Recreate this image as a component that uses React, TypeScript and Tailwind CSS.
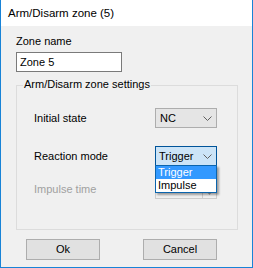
export default function App() {
  return (
    <div className="w-[253px] h-[268px] flex flex-col border-x border-b border-[#1883d7] bg-[#f0f0f0] text-[11px] leading-[13px] text-black font-['Liberation_Sans',Arial,sans-serif]">
      <div className="h-[26px] shrink-0 bg-white flex items-center pl-[7px] text-[11.5px]">Arm/Disarm zone (5)</div>
      <div className="flex flex-col pl-[15px] pt-[9px]">
        <div>Zone name</div>
        <div className="mt-[4px] w-[106px] h-[20px] border border-[#7a7a7a] bg-white pl-[3px] flex items-center">Zone 5</div>
        <div className="mt-[13px] relative w-[222px] h-[145px] border border-[#dcdcdc] flex flex-col pt-[22px] pl-[17px]">
          <span className="absolute left-[6px] -top-[8px] px-[1px] bg-[#f0f0f0]">Arm/Disarm zone settings</span>
          <div className="flex items-center h-[20px]">
            <div className="w-[121px]">Initial state</div>
            <div className="w-[62px] h-[20px] border border-[#adadad] bg-[#e5e5e5] flex items-center justify-between pl-[4px] pr-[4px]">
              <span>NC</span>
              <svg width="9" height="5" viewBox="0 0 9 5"><path d="M0.5 0.5 L4.5 4.5 L8.5 0.5" fill="none" stroke="#606060" strokeWidth="1" /></svg>
            </div>
          </div>
          <div className="flex items-center h-[20px] mt-[18px]">
            <div className="w-[121px]">Reaction mode</div>
            <div className="relative w-[62px] h-[20px] border border-[#005499] bg-[#cce4f7] flex items-center justify-between pl-[3px] pr-[4px]">
              <span>Trigger</span>
              <svg width="9" height="5" viewBox="0 0 9 5"><path d="M0.5 0.5 L4.5 4.5 L8.5 0.5" fill="none" stroke="#606060" strokeWidth="1" /></svg>
              <div className="absolute z-10 left-[-1px] top-[18px] w-[62px] border border-[#0a64ad] bg-white shadow-[2px_2px_2px_rgba(0,0,0,0.35)] flex flex-col">
                <div className="h-[13px] pl-[2px] bg-[#3399ff] text-white">Trigger</div>
                <div className="h-[13px] pl-[2px]">Impulse</div>
              </div>
            </div>
          </div>
          <div className="flex items-center h-[20px] mt-[13px]">
            <div className="w-[121px] text-[#a0a0a0]">Impulse time</div>
            <div className="w-[62px] h-[20px] border border-[#cccccc] bg-[#f0f0f0] flex justify-end">
              <div className="w-[14px] h-full border-l border-[#cccccc] flex flex-col">
                <div className="h-1/2 flex items-center justify-center">
                  <svg width="5" height="3" viewBox="0 0 5 3"><path d="M0 3 L2.5 0 L5 3 Z" fill="#a0a0a0" /></svg>
                </div>
                <div className="h-1/2 flex items-center justify-center">
                  <svg width="5" height="3" viewBox="0 0 5 3"><path d="M0 0 L2.5 3 L5 0 Z" fill="#a0a0a0" /></svg>
                </div>
              </div>
            </div>
          </div>
        </div>
        <div className="flex ml-[10px] mt-[9px] gap-[43px]">
          <div className="w-[74px] h-[21px] border border-[#adadad] bg-[#e1e1e1] flex items-center justify-center">Ok</div>
          <div className="w-[74px] h-[21px] border border-[#adadad] bg-[#e1e1e1] flex items-center justify-center">Cancel</div>
        </div>
      </div>
    </div>
  );
}
